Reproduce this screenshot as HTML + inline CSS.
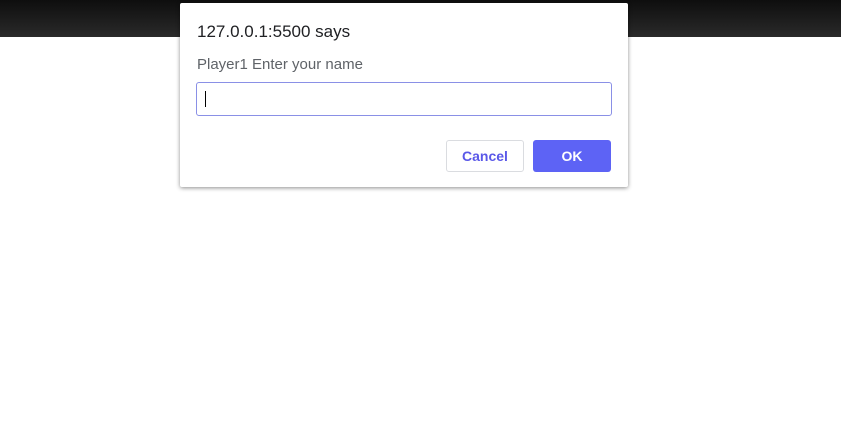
<!DOCTYPE html><html><head><style>
body{margin:0;width:841px;height:444px;background:#fff;position:relative;overflow:hidden;font-family:"Liberation Sans",sans-serif}
.bar{position:absolute;left:0;top:0;width:841px;height:37px;background:linear-gradient(#0e0e0e,#2a2a2a)}
.dlg{position:absolute;left:180px;top:3px;width:448px;height:184px;background:#fff;border-radius:2px;box-shadow:0 1px 4px rgba(0,0,0,.45)}
.t{position:absolute;left:17px;top:19px;font-size:17px;color:#202124}
.m{position:absolute;left:17px;top:53px;font-size:15px;color:#5f6368}
.in{position:absolute;left:16px;top:79px;border:1.5px solid #8a90e6;border-radius:3px;box-sizing:border-box;width:416px;height:34px}
.cur{position:absolute;left:8px;top:8px;width:1px;height:16px;background:#000}
.b{position:absolute;top:137px;height:32px;width:78px;border-radius:3px;box-sizing:border-box;font-size:14px;font-weight:bold;text-align:center;line-height:31px}
.c{left:266px;border:1px solid #dadce0;color:#5a58e8}
.o{left:353px;background:#5d63f5;color:#fff;line-height:33px}
</style></head><body>
<div class="bar"></div>
<div class="dlg">
<div class="t">127.0.0.1:5500 says</div>
<div class="m">Player1 Enter your name</div>
<div class="in"><div class="cur"></div></div>
<div class="b c">Cancel</div><div class="b o">OK</div>
</div>
</body></html>
